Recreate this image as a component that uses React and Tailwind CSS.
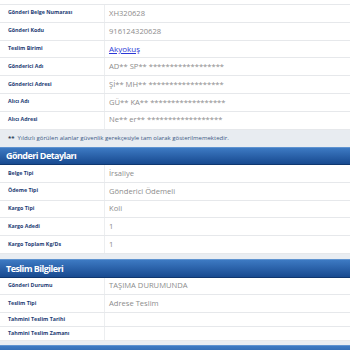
import React from 'react';

const senderRows = [
  { label: 'Gönderi Belge Numarası', value: 'XH320628' },
  { label: 'Gönderi Kodu', value: '916124320628' },
  { label: 'Teslim Birimi', value: 'Akyokuş', link: true },
  { label: 'Gönderici Adı', value: 'AD** SP** ******************' },
  { label: 'Gönderici Adresi', value: 'Şİ** MH** ******************' },
  { label: 'Alıcı Adı', value: 'GÜ** KA** ******************' },
  { label: 'Alıcı Adresi', value: 'Ne** er** ******************' },
];

const detailRows = [
  { label: 'Belge Tipi', value: 'İrsaliye' },
  { label: 'Ödeme Tipi', value: 'Gönderici Ödemeli' },
  { label: 'Kargo Tipi', value: 'Koli' },
  { label: 'Kargo Adedi', value: '1' },
  { label: 'Kargo Toplam Kg/Ds', value: '1' },
];

const deliveryRows = [
  { label: 'Gönderi Durumu', value: 'TAŞIMA DURUMUNDA' },
  { label: 'Teslim Tipi', value: 'Adrese Teslim' },
  { label: 'Tahmini Teslim Tarihi', value: '', short: true },
  { label: 'Tahmini Teslim Zamanı', value: '', short: true },
];

function Row({ label, value, link, short }) {
  return (
    <div className={`flex border-b border-[#e6e8eb] bg-white ${short ? 'h-[14px]' : 'h-[17.8px]'}`}>
      <div className="w-[105px] shrink-0 border-r border-[#eceef0] pl-2 flex items-center text-[5.3px] font-bold text-[#1d3c74]">
        {label}
      </div>
      <div className="flex-1 pl-[4px] flex items-center text-[7.6px] text-[#8c8c8c]">
        {link ? <span className="text-[#2b37d6] underline text-[8px]">{value}</span> : value}
      </div>
    </div>
  );
}

function SectionHeader({ title }) {
  return (
    <div className="h-[18.5px] flex items-center pl-[6px] text-[9px] tracking-[-0.55px] font-bold text-white bg-gradient-to-b from-[#3d7ac3] to-[#184a90] border-b border-[#0f376f] border-t border-t-[#5f93d0]">
      {title}
    </div>
  );
}

export default function App() {
  return (
    <div className="w-[350px] h-[350px] overflow-hidden bg-[#e9edf2]" style={{ fontFamily: '"Open Sans", "Noto Sans", sans-serif' }}>
      <div className="h-[5px] bg-white border-b border-[#e6e8eb]" />
      {senderRows.map(r => <Row key={r.label} {...r} />)}
      <div className="h-[17px] flex items-center pl-2 text-[6px] text-[#3d5a86] bg-[#e8ecf1]">
        <span className="font-bold text-[#2a3a55] mr-[3px]">**</span>
        Yıldızlı görülen alanlar güvenlik gerekçesiyle tam olarak gösterilmemektedir.
      </div>
      <SectionHeader title="Gönderi Detayları" />
      {detailRows.map(r => <Row key={r.label} {...r} />)}
      <div className="h-[5px]" />
      <SectionHeader title="Teslim Bilgileri" />
      {deliveryRows.map(r => <Row key={r.label} {...r} />)}
      <div className="h-[4px]" />
      <SectionHeader title="" />
    </div>
  );
}
